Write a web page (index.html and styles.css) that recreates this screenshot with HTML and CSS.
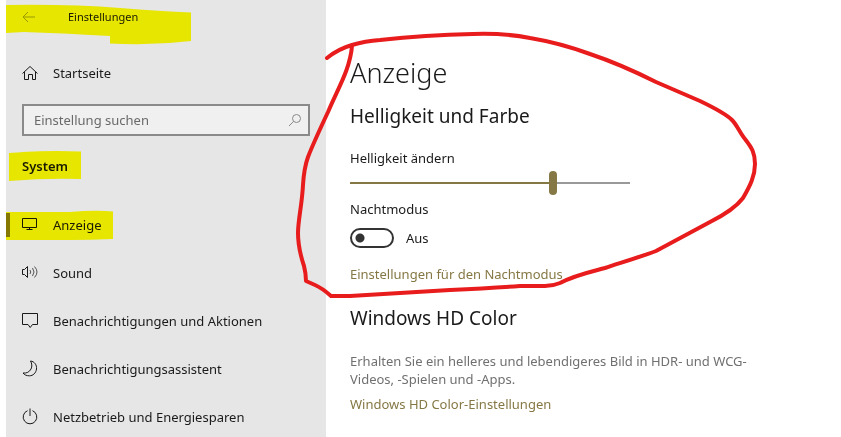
FILE: index.html
```html
<!DOCTYPE html>
<html lang="de">
<head>
  <meta charset="UTF-8" />
  <meta name="viewport" content="width=device-width, initial-scale=1.0"/>
  <title>Einstellungen</title>
  <link rel="stylesheet" href="styles.css">
</head>
<body>

  <div class="window">
    <aside class="sidebar">
      <header class="titlebar">
        <button class="back-btn" aria-label="Zurück">
          <svg width="14" height="12" viewBox="0 0 14 12"><path d="M13 6H1M6 1L1 6l5 5"/></svg>
        </button>
        <span>Einstellungen</span>
      </header>

      <a href="#" class="nav-item home">
        <svg class="icon" viewBox="0 0 18 18"><path d="M1.500 9.500L9 2.500 16.500 9.500M3.500 8V15.500H7.500V10.500H11.500V15.500H14.500V8"/></svg>
        Startseite
      </a>

      <div class="search">
        <input type="search" placeholder="Einstellung suchen" aria-label="Einstellung suchen">
        <svg width="14" height="14" viewBox="0 0 14 14"><circle cx="8.500" cy="5.500" r="4"/><path d="M5.600 8.400L1 13"/></svg>
      </div>

      <h2 class="group-title">System</h2>

      <nav>
        <a href="#" class="nav-item active">
          <svg class="icon" viewBox="0 0 18 18"><path d="M1.500 2.500H15.500V11.500H1.500zM8.500 11.500V13.500M5.500 13.500H11.500"/></svg>
          Anzeige
        </a>
        <a href="#" class="nav-item">
          <svg class="icon" viewBox="0 0 18 18"><path d="M1.500 5.500H3.500L6.500 2.500V13.500L3.500 10.500H1.500z"/><path class="thin" d="M9 6Q10.500 8 9 10M11.500 4Q14.500 8 11.500 12M13.500 2.500Q18.500 8 13.500 13.500"/></svg>
          Sound
        </a>
        <a href="#" class="nav-item">
          <svg class="icon" viewBox="0 0 18 18"><path d="M1.500 1.500H16.500V12.500H11.500L9.200 15.500 7 12.500H1.500z"/></svg>
          Benachrichtigungen und Aktionen
        </a>
        <a href="#" class="nav-item">
          <svg class="icon" viewBox="0 0 18 18"><path d="M9.500 1C13.500 1.500 16 5 15.500 9C15 13 12 15.800 8.500 15.800C5.500 15.800 3.500 15 2 13C5.500 13.500 8.500 12 10 9C11.300 6.500 11 3.500 9.500 1z"/></svg>
          Benachrichtigungsassistent
        </a>
        <a href="#" class="nav-item">
          <svg class="icon" viewBox="0 0 18 18"><path d="M6.500 2.700A6.800 6.800 0 1 0 11.500 2.700M9 0.500V8"/></svg>
          Netzbetrieb und Energiesparen
        </a>
      </nav>
    </aside>

    <main class="content">
      <h1>Anzeige</h1>

      <section>
        <h2>Helligkeit und Farbe</h2>
        <label for="brightness">Helligkeit ändern</label>
        <input type="range" id="brightness" class="slider" min="0" max="100" value="73">

        <label for="night">Nachtmodus</label>
        <div class="toggle-row">
          <input type="checkbox" id="night" class="toggle" role="switch">
          <span>Aus</span>
        </div>
        <a href="#" class="link">Einstellungen für den Nachtmodus</a>
      </section>

      <section class="hd-color">
        <h2>Windows HD Color</h2>
        <p>Erhalten Sie ein helleres und lebendigeres Bild in HDR- und WCG-Videos, -Spielen und -Apps.</p>
        <a href="#" class="link">Windows HD Color-Einstellungen</a>
      </section>
    </main>

    <!-- text marker -->
    <svg class="marks marker" width="200" height="250" viewBox="0 0 200 250" aria-hidden="true">
      <path d="M6 5Q70 4 120 8Q160 11 191 12.500V41Q150 46 110 43.500V36Q60 33 24 32L6 33z"/>
      <path d="M9 153Q45 150 81 151.500V179Q45 178 9 181z"/>
      <path d="M6 212H70Q95 210 113 211.500V239Q90 240 70 240H6z"/>
    </svg>

    <!-- red pen -->
    <svg class="marks pen" width="800" height="320" viewBox="0 0 800 320" aria-hidden="true">
      <path d="M327 58Q338 49 352 45Q365 41 380 40Q425 35 473 34Q505 33 530 38Q560 43 590 54Q620 64 656 82L700 101Q725 113 732 120C737 125 740 133 745 139C752 148 755 153 755 164C755 176 750 186 743 198C737 206 726 214 710 222L656 251C640 257 620 263 605 268C590 272 575 275 560 283Q553 286 545 286H520Q490 288 450 290L350 296H331Q322 288 315 285L306 281Q306 274 304 266Q298 248 298 233C298 220 302 205 303 185Q304 168 308 157Q313 144 328 112C337 90 350 70 352 46"/>
    </svg>
  </div>

</body>
</html>
```
FILE: styles.css
```css
/* General */
* {
  box-sizing: border-box;
}

body {
  margin: 0;
  font-family: "Noto Sans", "Open Sans", sans-serif;
  font-size: 13px;
  line-height: 20px;
  background: #fff;
  color: #1a1a1a;
}

h1, h2, p {
  margin: 0;
}

svg {
  fill: none;
  stroke: #1a1a1a;
}

.window {
  position: relative;
  display: flex;
  min-height: 100vh;
  padding-left: 6px;
  overflow: hidden;
}

/* Sidebar */
.sidebar {
  flex: 0 0 320px;
  background: #e6e6e6;
}

.titlebar {
  display: flex;
  align-items: center;
  gap: 32px;
  height: 33px;
  padding-left: 16px;
  font-size: 11px;
}

.back-btn {
  display: flex;
  padding: 0;
  border: none;
  background: none;
}

.back-btn svg {
  stroke: #999;
}

.nav-item {
  display: flex;
  align-items: center;
  gap: 14px;
  height: 48px;
  padding-left: 15px;
  color: #1a1a1a;
  text-decoration: none;
}

.icon {
  width: 18px;
  height: 18px;
}

.thin {
  stroke: #555;
}

.home {
  margin-top: 16px;
}

.search {
  display: flex;
  align-items: center;
  height: 32px;
  margin: 7px 16px 0;
  padding: 0 6px 0 10px;
  border: 2px solid #8a8a8a;
  background: #f0f0f0;
}

.search input {
  flex: 1;
  min-width: 0;
  padding: 0;
  border: none;
  outline: none;
  background: none;
  font: inherit;
}

.search input::placeholder {
  color: #6a6a6a;
}

.search svg {
  stroke: #888;
}

.group-title {
  margin: 20px 16px 25px;
  font-size: 13px;
  font-weight: 600;
  line-height: 20px;
}

.active {
  position: relative;
}

.active::before {
  content: "";
  position: absolute;
  left: 0;
  top: 12px;
  width: 4px;
  height: 24px;
  background: #857845;
}

/* Content */
.content {
  flex: 1;
  padding: 53px 80px 20px 24px;
}

.content h1 {
  font-size: 27px;
  font-weight: 300;
  line-height: 40px;
}

.content h2 {
  margin: 9px 0 18px;
  font-size: 19px;
  font-weight: 400;
  line-height: 28px;
}

.content label {
  display: block;
}

.slider {
  display: block;
  appearance: none;
  width: 280px;
  height: 24px;
  margin: 3px 0 4px;
  background: linear-gradient(#857845, #857845) left center / 73% 2px no-repeat,
              linear-gradient(#999, #999) center / 100% 2px no-repeat;
}

.slider::-webkit-slider-thumb {
  appearance: none;
  width: 8px;
  height: 24px;
  border-radius: 4px;
  background: #857845;
}

.toggle-row {
  display: flex;
  align-items: center;
  gap: 12px;
  margin: 9px 0 16px;
}

.toggle {
  appearance: none;
  width: 44px;
  height: 20px;
  margin: 0;
  border: 2px solid #333;
  border-radius: 10px;
  background: radial-gradient(circle at 8px 8px, #333 4px, transparent 5px);
}

.toggle:checked {
  background: radial-gradient(circle at 32px 8px, #333 4px, transparent 5px);
}

.link {
  display: block;
  color: #857845;
  text-decoration: none;
}

.hd-color h2 {
  margin: 20px 0;
}

.hd-color p {
  margin-bottom: 6px;
  color: #707070;
  line-height: 18px;
}

/* Drawn marks */
.marks {
  position: absolute;
  top: 0;
  left: 0;
  stroke: none;
  pointer-events: none;
}

.marker {
  fill: #ff0;
  mix-blend-mode: multiply;
}

.pen {
  stroke: #e81c1c;
  stroke-width: 4;
  stroke-linecap: round;
  stroke-linejoin: round;
}
```
